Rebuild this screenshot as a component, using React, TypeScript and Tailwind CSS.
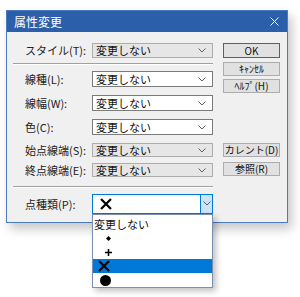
import React from "react";

const font = { fontFamily: '"Noto Sans CJK JP", "Noto Sans", sans-serif' };

function Chevron() {
  return (
    <svg width="8" height="5" viewBox="0 0 8 5" className="shrink-0">
      <path d="M0.5 0.5 L4 4 L7.5 0.5" fill="none" stroke="#606060" strokeWidth="1" />
    </svg>
  );
}

function Select({ gray, h }: { gray?: boolean; h: string }) {
  return (
    <div
      className={`w-[121px] ${h} border flex items-center pl-[3px] pr-[6px] justify-between ${
        gray ? "bg-[#e6e6e6] border-[#adadad]" : "bg-white border-[#7a7a7a]"
      }`}
    >
      <span className="text-[11px] leading-none text-[#111]">変更しない</span>
      <Chevron />
    </div>
  );
}

function Row({ label, children, className = "" }: { label: string; children: React.ReactNode; className?: string }) {
  return (
    <div className={`flex items-center pl-[12px] ${className}`}>
      <div className="w-[67px] text-[11px] leading-none text-[#222]">{label}</div>
      {children}
    </div>
  );
}

function Btn({ children, def, className = "" }: { children: React.ReactNode; def?: boolean; className?: string }) {
  return (
    <div
      className={`w-[57px] flex items-center justify-center text-[10px] leading-none text-[#111] ${
        def ? "h-[15px] border border-[#0078d7] bg-[#e1e1e1]" : "h-[14px] border border-[#adadad] bg-[#e1e1e1]"
      } ${className}`}
    >
      {children}
    </div>
  );
}

function Sep({ className = "" }: { className?: string }) {
  return (
    <div className={`w-[200px] ${className}`}>
      <div className="h-px bg-[#a0a0a0]" />
      <div className="h-px bg-white" />
    </div>
  );
}

function XMark({ size = 12, w = 2.2 }: { size?: number; w?: number }) {
  return (
    <svg width={size} height={size} viewBox="0 0 12 12">
      <path d="M1 1 L11 11 M11 1 L1 11" stroke="#000" strokeWidth={w} />
    </svg>
  );
}

export default function App() {
  return (
    <div className="w-[300px] h-[297px] bg-white pl-[6px] pt-[10px]" style={font}>
      <div className="w-[282px] h-[213px] border border-[#4a7bc0] bg-[#f0f0f0] flex flex-col shadow-[4px_6px_10px_rgba(0,0,0,0.22)]">
        <div className="h-[21px] bg-[#2b5fa9] flex items-center justify-between pl-[7px] pr-[8px]">
          <span className="text-[12px] leading-none text-white">属性変更</span>
          <svg width="9" height="9" viewBox="0 0 9 9">
            <path d="M0.5 0.5 L8.5 8.5 M8.5 0.5 L0.5 8.5" stroke="#fff" strokeWidth="1" />
          </svg>
        </div>
        <div className="flex">
          <div className="pl-[6px] pt-[11px] flex flex-col">
            <Row label="スタイル(T):">
              <Select gray h="h-[15px]" />
            </Row>
            <Sep className="mt-[5px]" />
            <Row label="線種(L):" className="mt-[6px]">
              <Select h="h-[16px]" />
            </Row>
            <Row label="線幅(W):" className="mt-[8px]">
              <Select h="h-[16px]" />
            </Row>
            <Row label="色(C):" className="mt-[8px]">
              <Select h="h-[16px]" />
            </Row>
            <Row label="始点線端(S):" className="mt-[8px]">
              <Select gray h="h-[14px]" />
            </Row>
            <Row label="終点線端(E):" className="mt-[6px]">
              <Select gray h="h-[14px]" />
            </Row>
            <Sep className="mt-[9px]" />
            <Row label="点種類(P):" className="mt-[6px]">
              <div className="relative w-[121px] h-[20px] border border-[#0078d7] bg-white flex items-center">
                <div className="flex-1 pl-[7px] flex items-center">
                  <XMark />
                </div>
                <div className="w-[13px] h-[20px] -mt-px -mr-px border border-[#0078d7] bg-[#cce4f7] flex items-center justify-center">
                  <Chevron />
                </div>
                <div className="absolute left-[-1px] top-[19px] w-[121px] h-[74px] border border-[#7a8fb0] bg-white pt-[2px] shadow-[3px_3px_6px_rgba(0,0,0,0.25)] z-10">
                  <div className="h-[14px] pl-[1px] flex items-center text-[11px] leading-none text-[#111]">変更しない</div>
                  <div className="h-[14px] flex items-center pl-[13px]">
                    <svg width="5" height="5" viewBox="0 0 5 5">
                      <path d="M2.5 0 L5 2.5 L2.5 5 L0 2.5 Z" fill="#000" />
                    </svg>
                  </div>
                  <div className="h-[14px] flex items-center pl-[12px]">
                    <svg width="7" height="7" viewBox="0 0 7 7">
                      <path d="M3.5 0 V7 M0 3.5 H7" stroke="#000" strokeWidth="1.6" />
                    </svg>
                  </div>
                  <div className="h-[14px] flex items-center pl-[5px] bg-[#0078d7]">
                    <XMark />
                  </div>
                  <div className="h-[14px] flex items-center pl-[7px]">
                    <svg width="11" height="11" viewBox="0 0 11 11">
                      <circle cx="5.5" cy="5.5" r="5.5" fill="#000" />
                    </svg>
                  </div>
                </div>
              </div>
            </Row>
          </div>
          <div className="ml-[10px] pt-[11px] flex flex-col">
            <Btn def>OK</Btn>
            <Btn className="mt-[4px]">ｷｬﾝｾﾙ</Btn>
            <Btn className="mt-[3px]">ﾍﾙﾌﾟ(H)</Btn>
            <Btn className="mt-[50px]">カレント(D)</Btn>
            <Btn className="mt-[5px]">参照(R)</Btn>
          </div>
        </div>
      </div>
    </div>
  );
}
